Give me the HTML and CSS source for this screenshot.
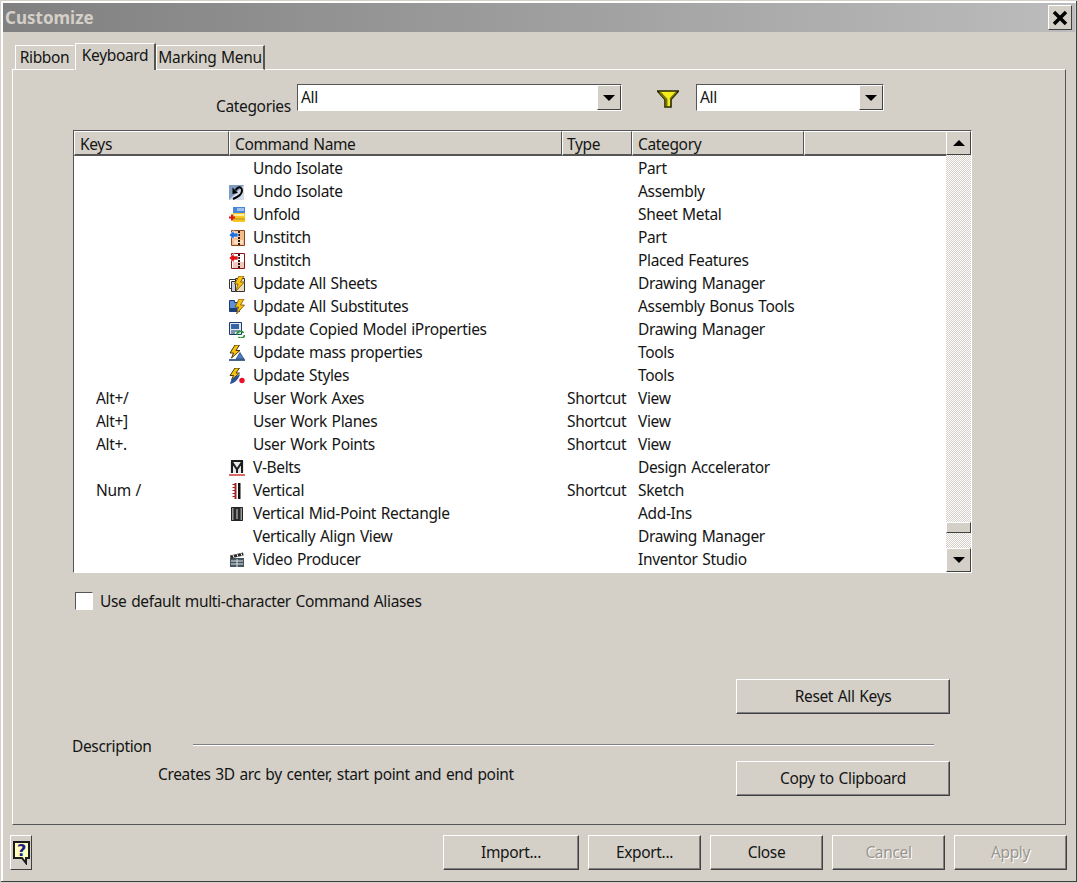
FILE: index.html
```html
<!DOCTYPE html>
<html lang="en">
<head>
<meta charset="utf-8">
<title>Customize</title>
<link rel="stylesheet" href="styles.css">
</head>
<body>
<svg class="defs" width="0" height="0" aria-hidden="true">
  <symbol id="i-undo" viewBox="0 0 16 16"><rect x="0" y="1" width="15" height="15" fill="#7f9bc0"/><path d="M0 16L15 1V16Z" fill="#d3dce8"/><path d="M4 15C9 13 13 11 13 6.500C13 3.500 10.500 2.500 8.500 4L6.500 6" fill="none" stroke="#000" stroke-width="2"/><path d="M3.500 3.500L3.500 10 9 9Z" fill="#000"/></symbol>
  <symbol id="i-unfold" viewBox="0 0 16 16"><path d="M4 0h12v6H4z" fill="#4a84d8"/><path d="M8 1h7v3H8z" fill="#9cc2f0"/><path d="M4 6h12v9H4z" fill="#f7c820"/><path d="M5 7h10v2H5z" fill="#fff0a0"/><path d="M4 12h12" stroke="#b98a10"/><path d="M0 10.500h6M3 7.500v6" stroke="#e01515" stroke-width="2"/></symbol>
  <symbol id="i-unstitch1" viewBox="0 0 16 16"><path d="M2.500.5h13v15h-13z" fill="#f6bd8c" stroke="#8a4520"/><path d="M5 10h9v4H5z" fill="#fbdcc0"/><path d="M10 1v14" stroke="#2a1a10" stroke-width="2" stroke-dasharray="2 1"/><path d="M0 5L5 .5V3H9V7H5V9.500Z" fill="#1f6fe0" stroke="#fff" stroke-width=".6"/></symbol>
  <symbol id="i-unstitch2" viewBox="0 0 16 16"><path d="M2.500.5h13v15h-13z" fill="#fff" stroke="#8e1414"/><path d="M4 9h11v6H4z" fill="#f3c8bc"/><path d="M10 1v14" stroke="#2a1010" stroke-width="2" stroke-dasharray="2 1"/><path d="M0 5L5 .5V3H9V7H5V9.500Z" fill="#e01010" stroke="#fff" stroke-width=".6"/></symbol>
  <symbol id="i-sheets" viewBox="0 0 16 16"><path d="M.5 3.500h8v9h-8z" fill="#fff" stroke="#333"/><path d="M2.500 5.500h8v10h-8z" fill="#c8d4e4" stroke="#333"/><path d="M6.500 2.500h9v13h-9z" fill="#e8e0c0" stroke="#333"/><path d="M10 0L5.500 8H9L7 15 15.500 6H11.500L15 0Z" fill="#f9c20c" stroke="#7a4a00" stroke-width=".8"/></symbol>
  <symbol id="i-subst" viewBox="0 0 16 16"><path d="M.5 1.500h5v2h5v9H.5z" fill="#5e90d8" stroke="#1d3f78"/><path d="M1 9h7v3H1z" fill="#1d3f78"/><path d="M10 0L6 8H9.500L7.500 15 15.500 6H11.500L15 0Z" fill="#f9c20c" stroke="#7a4a00" stroke-width=".8"/></symbol>
  <symbol id="i-copied" viewBox="0 0 16 16"><path d="M.5.500h12v12H.5z" fill="#e3e9f0" stroke="#1c3b68"/><path d="M2 2h8v5H2z" fill="#3764a5"/><path d="M2 9h9M2 11h4" stroke="#1c3b68"/><path d="M8 13a3.500 3.500 0 0 1 6.500-2" fill="none" stroke="#1f9a2e" stroke-width="1.700"/><path d="M15.500 13a3.500 3.500 0 0 1-6 2" fill="none" stroke="#1f9a2e" stroke-width="1.700"/></symbol>
  <symbol id="i-mass" viewBox="0 0 16 16"><path d="M6 0L1 8H4.500L2.500 13 11 5.500H7L10.500 0Z" fill="#f9c20c" stroke="#3a2600" stroke-width=".9"/><path d="M0 15h16" stroke="#1f3f75" stroke-width="1.600"/><path d="M11 7.500L15 14H7Z" fill="#4f80bd" stroke="#1f3f75" stroke-width=".7"/></symbol>
  <symbol id="i-styles" viewBox="0 0 16 16"><path d="M6 0L1 7.500H4.500L2.500 12 10.500 5H7L10.500 0Z" fill="#f9c20c" stroke="#3a2600" stroke-width=".9"/><path d="M1 16C2 10 7 8.500 11 6C10 11 6 15 1 16Z" fill="#2a5098"/><circle cx="13" cy="12.500" r="2.700" fill="#e8102a"/></symbol>
  <symbol id="i-vbelts" viewBox="0 0 16 16"><path d="M1 1h14v12H1z" fill="#e6e8ec"/><path d="M2 1h12M3 1v12M13 1v12M3 2L8 9.500 13 2M8 9.500V13" fill="none" stroke="#1c1c1c" stroke-width="2"/><path d="M0 15h16" stroke="#c92a2a" stroke-width="1.400"/></symbol>
  <symbol id="i-vertical" viewBox="0 0 16 16"><path d="M5.500 0h2v16h-2z" fill="#a52222"/><path d="M3.500 1.500h3M3.500 4.500h3M3.500 7.500h3M3.500 10.500h3M3.500 13.500h3" stroke="#a52222"/><path d="M9 0h2.500v16H9z" fill="#111"/></symbol>
  <symbol id="i-midrect" viewBox="0 0 16 16"><path d="M2 1h12v14H2z" fill="#9a9a9a"/><path d="M4.500 1h7v14h-7z" fill="#2a2a2a"/><path d="M7 3h2v10H7z" fill="#808080"/><path d="M2.500 1.500h11v13h-11z" fill="none" stroke="#222"/></symbol>
  <symbol id="i-video" viewBox="0 0 16 16"><path d="M1 6h14v9H1z" fill="#47555f"/><path d="M2 9h12M2 12h12M8 7v8" stroke="#dfe6ea"/><path d="M1 3.500L14 .5l.7 3L1.700 6.500Z" fill="#2a2a2a"/><path d="M4 3l1 2.500M8 2.200l1 2.500M12 1.300l1 2.500" stroke="#fff"/></symbol>
</svg>

<div class="dialog">
  <header class="titlebar">
    <span class="title">Customize</span>
    <button class="close" aria-label="Close"><svg width="16" height="16" viewBox="0 0 16 16"><path d="M2 2L14 14M14 2L2 14" stroke="#000" stroke-width="3.500"/></svg></button>
  </header>

  <div class="tabs">
    <div class="tab tab-ribbon">Ribbon</div>
    <div class="tab tab-keyboard active">Keyboard</div>
    <div class="tab tab-marking">Marking Menu</div>
  </div>

  <main class="panel">
    <div class="filters">
      <span class="cat-label">Categories</span>
      <div class="combo combo-wide"><span class="combo-value">All</span><span class="sb-btn combo-btn"><i class="arrow-down"></i></span></div>
      <svg class="funnel" width="22" height="18" viewBox="0 0 22 18"><path d="M.5 1H21.500L14 9.500V17H8V9.500Z" fill="#f5ee1c" stroke="#262600" stroke-width="1.600"/><path d="M3 2.500L9.500 9.500V16" fill="none" stroke="#77750c" stroke-width="2"/><path d="M19 2.500L13 9" fill="none" stroke="#77750c" stroke-width="1.500"/></svg>
      <div class="combo combo-narrow"><span class="combo-value">All</span><span class="sb-btn combo-btn"><i class="arrow-down"></i></span></div>
    </div>

    <div class="list">
      <div class="list-main">
        <div class="list-head">
          <div class="hcell hc-keys">Keys</div>
          <div class="hcell hc-name">Command Name</div>
          <div class="hcell hc-type">Type</div>
          <div class="hcell hc-cat">Category</div>
          <div class="hcell hc-rest"></div>
        </div>
        <div class="rows">
          <div class="row"><span class="k"></span><span class="n"><span class="ico"></span>Undo Isolate</span><span class="t"></span><span class="c">Part</span></div>
          <div class="row"><span class="k"></span><span class="n"><svg class="ico"><use href="#i-undo"/></svg>Undo Isolate</span><span class="t"></span><span class="c">Assembly</span></div>
          <div class="row"><span class="k"></span><span class="n"><svg class="ico"><use href="#i-unfold"/></svg>Unfold</span><span class="t"></span><span class="c">Sheet Metal</span></div>
          <div class="row"><span class="k"></span><span class="n"><svg class="ico"><use href="#i-unstitch1"/></svg>Unstitch</span><span class="t"></span><span class="c">Part</span></div>
          <div class="row"><span class="k"></span><span class="n"><svg class="ico"><use href="#i-unstitch2"/></svg>Unstitch</span><span class="t"></span><span class="c">Placed Features</span></div>
          <div class="row"><span class="k"></span><span class="n"><svg class="ico"><use href="#i-sheets"/></svg>Update All Sheets</span><span class="t"></span><span class="c">Drawing Manager</span></div>
          <div class="row"><span class="k"></span><span class="n"><svg class="ico"><use href="#i-subst"/></svg>Update All Substitutes</span><span class="t"></span><span class="c">Assembly Bonus Tools</span></div>
          <div class="row"><span class="k"></span><span class="n"><svg class="ico"><use href="#i-copied"/></svg>Update Copied Model iProperties</span><span class="t"></span><span class="c">Drawing Manager</span></div>
          <div class="row"><span class="k"></span><span class="n"><svg class="ico"><use href="#i-mass"/></svg>Update mass properties</span><span class="t"></span><span class="c">Tools</span></div>
          <div class="row"><span class="k"></span><span class="n"><svg class="ico"><use href="#i-styles"/></svg>Update Styles</span><span class="t"></span><span class="c">Tools</span></div>
          <div class="row"><span class="k">Alt+/</span><span class="n"><span class="ico"></span>User Work Axes</span><span class="t">Shortcut</span><span class="c">View</span></div>
          <div class="row"><span class="k">Alt+]</span><span class="n"><span class="ico"></span>User Work Planes</span><span class="t">Shortcut</span><span class="c">View</span></div>
          <div class="row"><span class="k">Alt+.</span><span class="n"><span class="ico"></span>User Work Points</span><span class="t">Shortcut</span><span class="c">View</span></div>
          <div class="row"><span class="k"></span><span class="n"><svg class="ico"><use href="#i-vbelts"/></svg>V-Belts</span><span class="t"></span><span class="c">Design Accelerator</span></div>
          <div class="row"><span class="k">Num /</span><span class="n"><svg class="ico"><use href="#i-vertical"/></svg>Vertical</span><span class="t">Shortcut</span><span class="c">Sketch</span></div>
          <div class="row"><span class="k"></span><span class="n"><svg class="ico"><use href="#i-midrect"/></svg>Vertical Mid-Point Rectangle</span><span class="t"></span><span class="c">Add-Ins</span></div>
          <div class="row"><span class="k"></span><span class="n"><span class="ico"></span>Vertically Align View</span><span class="t"></span><span class="c">Drawing Manager</span></div>
          <div class="row"><span class="k"></span><span class="n"><svg class="ico"><use href="#i-video"/></svg>Video Producer</span><span class="t"></span><span class="c">Inventor Studio</span></div>
        </div>
      </div>
      <div class="scrollbar">
        <span class="sb-btn sb-end"><i class="arrow-up"></i></span>
        <span class="track track-a"></span>
        <span class="sb-btn sb-thumb"></span>
        <span class="track track-b"></span>
        <span class="sb-btn sb-end"><i class="arrow-down"></i></span>
      </div>
    </div>

    <label class="check"><span class="box"></span>Use default multi-character Command Aliases</label>

    <button class="btn btn-reset">Reset All Keys</button>

    <div class="desc-head">
      <span class="desc-label">Description</span>
      <span class="rule"></span>
    </div>
    <div class="desc-body">
      <span class="desc-text">Creates 3D arc by center, start point and end point</span>
      <button class="btn btn-copy">Copy to Clipboard</button>
    </div>
  </main>

  <footer class="footer">
    <button class="help" aria-label="Help"><svg width="19" height="25" viewBox="0 0 19 25"><path d="M2 2h15v16h-3v5l-4-5H2z" fill="#ffffc0" stroke="#1c1c1c" stroke-width="2"/><text x="9.500" y="16" class="help-q">?</text></svg></button>
    <div class="actions">
      <button class="btn btn-import">Import...</button>
      <button class="btn btn-std">Export...</button>
      <button class="btn btn-std">Close</button>
      <button class="btn btn-std off">Cancel</button>
      <button class="btn btn-std off">Apply</button>
    </div>
  </footer>
</div>
</body>
</html>
```

FILE: styles.css
```css
* { box-sizing: border-box; }
html, body { margin: 0; padding: 0; }
body {
  width: 1078px;
  height: 883px;
  overflow: hidden;
  background: #d4d0c8;
  font-family: "Noto Sans", "DejaVu Sans", sans-serif;
  font-size: 15.5px;
  letter-spacing: -0.35px;
  word-spacing: 1px;
  color: #151515;
}
button { font: inherit; letter-spacing: inherit; word-spacing: inherit; color: inherit; padding: 0; background: #d4d0c8; }
.defs { position: absolute; }

.dialog {
  width: 1078px;
  height: 883px;
  padding: 3px;
  display: flex;
  flex-direction: column;
  background: #d4d0c8;
  box-shadow: inset 0 0 0 1px #d4d0c8, inset -2px -2px 0 #404040, inset 3px 3px 0 #fff;
}

.titlebar {
  height: 29px;
  flex: none;
  display: flex;
  align-items: center;
  justify-content: space-between;
  padding: 0 3px 0 2px;
  background: linear-gradient(90deg, #808080, #bcbcbc);
}
.title { font-weight: 700; font-size: 17px; letter-spacing: 0; color: #d4d0c8; }
.close {
  width: 24px;
  height: 25px;
  display: flex;
  align-items: center;
  justify-content: center;
  border: 1px solid;
  border-color: #fff #404040 #404040 #fff;
}

.tabs {
  flex: none;
  height: 27px;
  margin: 11px 0 -1px 12px;
  display: flex;
  align-items: flex-end;
  position: relative;
  z-index: 1;
}
.tab {
  height: 25px;
  display: flex;
  align-items: center;
  justify-content: center;
  white-space: nowrap;
  border-top: 1px solid #fff;
  border-left: 1px solid #fff;
  border-right: 2px solid #555;
  border-bottom: 1px solid #fff;
  background: #d4d0c8;
  line-height: 1;
}
.tab-ribbon { width: 60px; border-right-color: transparent; }
.tab-keyboard { width: 81px; height: 27px; border-bottom: 0; padding-bottom: 3px; }
.tab-marking { width: 109px; }

.panel {
  flex: none;
  width: 1054px;
  height: 756px;
  margin-left: 9px;
  display: flex;
  flex-direction: column;
  border: 1px solid;
  border-color: #fff #555 #555 #fff;
}

.filters {
  flex: none;
  height: 27px;
  margin: 14px 0 0 203px;
  display: flex;
}
.cat-label { width: 81px; padding-top: 9px; line-height: 26px; height: 27px; }
.combo {
  height: 27px;
  display: flex;
  justify-content: space-between;
  background: #fff;
  border: 1px solid;
  border-color: #555 #fff #fff #555;
}
.combo-wide { width: 325px; }
.combo-narrow { width: 188px; }
.combo-value { padding-left: 3px; line-height: 25px; }
.combo-btn { width: 24px; height: 25px; }
.funnel { margin: 6px 17px 0 35px; flex: none; }

.sb-btn {
  display: flex;
  align-items: center;
  justify-content: center;
  background: #d4d0c8;
  border: 1px solid;
  border-color: #fff #404040 #404040 #fff;
  flex: none;
}
.arrow-down, .arrow-up { width: 0; height: 0; border: 6px solid transparent; }
.arrow-down { border-top: 6px solid #000; border-bottom: 0; }
.arrow-up { border-bottom: 6px solid #000; border-top: 0; }

.list {
  flex: none;
  width: 899px;
  height: 443px;
  margin: 19px 0 0 60px;
  display: flex;
  background: #fff;
  border: 1px solid;
  border-color: #555 #fff #fff #555;
}
.list-main { width: 872px; }
.list-head { height: 25px; display: flex; background: #d4d0c8; }
.hcell {
  padding-left: 5px;
  line-height: 24px;
  border-top: 1px solid #fff;
  border-left: 1px solid #fff;
  border-right: 1px solid #555;
  border-bottom: 2px solid #555;
}
.hc-keys { width: 155px; }
.hc-name { width: 333px; }
.hc-type { width: 70px; padding-left: 4px; }
.hc-cat { width: 172px; }
.hc-rest { flex: 1; border-right: 0; }

.rows { padding-top: 1px; }
.row {
  height: 23px;
  line-height: 23px;
  display: grid;
  grid-template-columns: 155px 333px 70px 1fr;
  white-space: nowrap;
}
.k { padding-left: 22px; }
.n { display: flex; align-items: center; gap: 8px; }
.t { padding-left: 5px; }
.c { padding-left: 6px; }
.ico { width: 16px; height: 16px; flex: none; display: block; }

.scrollbar { width: 25px; display: flex; flex-direction: column; }
.sb-end { height: 24px; }
.sb-thumb { height: 11px; }
.track {
  flex: none;
  background: repeating-conic-gradient(#fff 0 25%, #d4d0c8 0 50%) 0 0 / 2px 2px;
}
.track-a { height: 367px; }
.track-b { height: 15px; }

.check {
  flex: none;
  height: 18px;
  margin: 19px 0 0 62px;
  display: flex;
  align-items: center;
  gap: 7px;
}
.box {
  width: 18px;
  height: 18px;
  background: #fff;
  border: 1px solid;
  border-color: #555 #fff #fff #555;
}

.btn {
  border: 1px solid;
  border-color: #fff #404040 #404040 #fff;
  box-shadow: inset -1px -1px 0 #808080;
  height: 35px;
  padding-bottom: 2px;
}
.btn-reset, .btn-copy { width: 214px; flex: none; }
.btn-reset { margin: 69px 0 0 723px; }

.desc-head {
  flex: none;
  height: 23px;
  margin: 21px 0 0 59px;
  display: flex;
  align-items: center;
}
.desc-label { width: 121px; padding-bottom: 2px; }
.rule {
  width: 741px;
  height: 2px;
  margin-bottom: 3px;
  background: #808080;
  border-bottom: 1px solid #fff;
}
.desc-body {
  flex: none;
  height: 35px;
  margin: 3px 0 0 145px;
  display: flex;
  gap: 219px;
}
.desc-text { width: 359px; line-height: 26px; white-space: nowrap; }

.footer {
  flex: 1;
  display: flex;
  justify-content: space-between;
  padding: 10px 8px 0 7px;
}
.help {
  width: 22px;
  height: 35px;
  display: flex;
  align-items: center;
  justify-content: center;
  border: 1px solid;
  border-color: #fff #404040 #404040 #fff;
}
.help-q { font: 700 16px "DejaVu Sans", sans-serif; fill: #1d1d8a; text-anchor: middle; }
.actions { display: flex; gap: 9px; }
.btn-import { width: 136px; }
.btn-std { width: 113px; }
.off { color: #9a968e; text-shadow: 1px 1px 0 #fff; }
```
